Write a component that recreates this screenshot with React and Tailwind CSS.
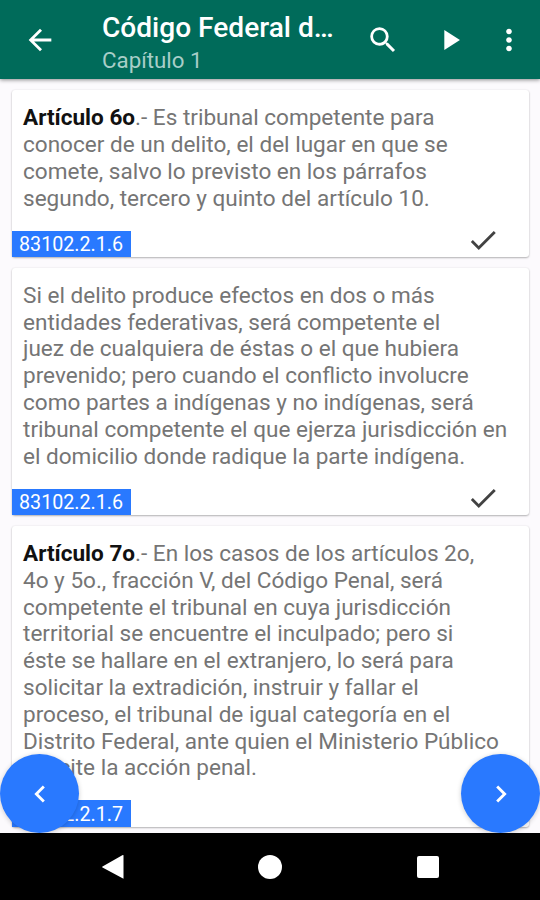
import { MdArrowBack, MdCheck, MdChevronLeft, MdChevronRight, MdMoreVert, MdPlayArrow, MdSearch } from 'react-icons/md'

const articles = [
  {
    id: 1,
    code: '83102.2.1.6',
    title: 'Artículo 6o',
    lines: [
      '.- Es tribunal competente para',
      'conocer de un delito, el del lugar en que se',
      'comete, salvo lo previsto en los párrafos',
      'segundo, tercero y quinto del artículo 10.',
    ],
    checked: true,
  },
  {
    id: 2,
    code: '83102.2.1.6',
    lines: [
      'Si el delito produce efectos en dos o más',
      'entidades federativas, será competente el',
      'juez de cualquiera de éstas o el que hubiera',
      'prevenido; pero cuando el conflicto involucre',
      'como partes a indígenas y no indígenas, será',
      'tribunal competente el que ejerza jurisdicción en',
      'el domicilio donde radique la parte indígena.',
    ],
    checked: true,
  },
  {
    id: 3,
    code: '83102.2.1.7',
    title: 'Artículo 7o',
    lines: [
      '.- En los casos de los artículos 2o,',
      '4o y 5o., fracción V, del Código Penal, será',
      'competente el tribunal en cuya jurisdicción',
      'territorial se encuentre el inculpado; pero si',
      'éste se hallare en el extranjero, lo será para',
      'solicitar la extradición, instruir y fallar el',
      'proceso, el tribunal de igual categoría en el',
      'Distrito Federal, ante quien el Ministerio Público',
      'solicite la acción penal.',
    ],
    checked: false,
  },
]

function Toolbar() {
  return (
    <header className="z-10 flex h-[79px] shrink-0 items-center bg-[#006b5a] pl-[23px] text-white shadow-[0_1px_4px_rgba(0,0,0,0.45)]">
      <MdArrowBack className="size-[34px] shrink-0" />
      <div className="ml-[45px] w-[238px] shrink-0 pt-[8px]">
        <h1 className="text-[28.1px] leading-[34px] font-medium whitespace-nowrap">Código Federal d…</h1>
        <p className="text-[22.3px] leading-[31px] text-[#a8cec8]">Capítulo 1</p>
      </div>
      <MdSearch className="ml-[25.5px] size-[34px] shrink-0" />
      <MdPlayArrow className="ml-[33.5px] size-[34px] shrink-0" />
      <MdMoreVert className="ml-[25px] size-[34px] shrink-0" />
    </header>
  )
}

function ArticleCard({ article }) {
  return (
    <article className="rounded-[3px] bg-white pt-[15.2px] shadow-[0_1px_2px_rgba(0,0,0,0.28),0_0_2px_rgba(0,0,0,0.08)]">
      <p className="pl-[11px] text-[22.55px] leading-[26.8px] whitespace-nowrap text-[#757575]">
        {article.lines.map((line, i) => (
          <span key={line} className="block">
            {i === 0 && article.title && <b className="font-bold text-[#111111]">{article.title}</b>}
            {line}
          </span>
        ))}
      </p>
      <div className="mt-[18.3px] flex h-[26.5px] items-center justify-between pr-[29px]">
        <span className="flex h-full w-[119px] items-center bg-[#2979ff] pt-[2px] pl-[7px] text-[19.7px] leading-none text-white">
          {article.code}
        </span>
        {article.checked && <MdCheck className="-mt-[7px] size-[34px] text-[#424242]" />}
      </div>
    </article>
  )
}

function NavBar() {
  return (
    <nav className="flex h-[67px] shrink-0 items-center bg-black pl-[101px]">
      <svg viewBox="0 0 24 26" className="h-[26px] w-6 fill-white">
        <path d="M22.5 1.2v23.6L1.5 13.6q-1-.6 0-1.2L21.3 1.2q.7-.4 1.2 0z" />
      </svg>
      <span className="ml-[133px] size-6 rounded-full bg-white" />
      <span className="ml-[135px] size-[22px] rounded-[2px] bg-white" />
    </nav>
  )
}

export default function App() {
  return (
    <div className="relative flex h-[900px] w-[540px] flex-col overflow-hidden bg-[#fcfafd] font-['Roboto',sans-serif]">
      <Toolbar />
      <main className="flex min-h-0 flex-1 flex-col gap-[10.5px] overflow-hidden pt-[11px] pr-[11px] pl-[12px]">
        {articles.map((article) => (
          <ArticleCard key={article.id} article={article} />
        ))}
      </main>
      <NavBar />

      <button className="absolute top-[754px] left-0 flex size-[79px] items-center justify-center rounded-full bg-[#2979ff] text-white shadow-[0_1px_5px_rgba(0,0,0,0.2)]">
        <MdChevronLeft className="size-[34px]" />
      </button>
      <button className="absolute top-[754px] right-0 flex size-[79px] items-center justify-center rounded-full bg-[#2979ff] text-white shadow-[0_1px_5px_rgba(0,0,0,0.2)]">
        <MdChevronRight className="size-[34px]" />
      </button>
    </div>
  )
}
